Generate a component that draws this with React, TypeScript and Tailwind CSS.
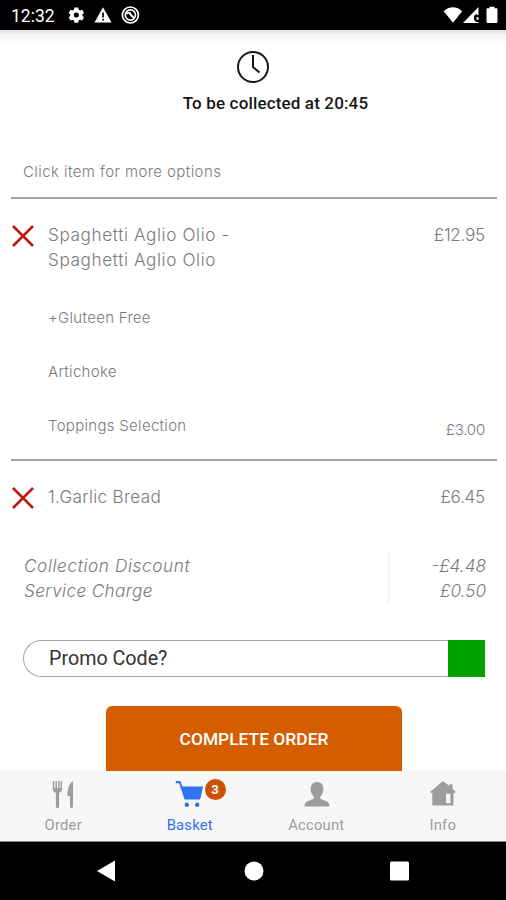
import type { ReactNode } from "react";
import { clsx } from "clsx";

type OrderLine = {
  name: string[];
  price: string;
  className: string;
};

const TABS = [
  { label: "Order", icon: <CutleryIcon /> },
  { label: "Basket", icon: <CartIcon />, badge: 3 },
  { label: "Account", icon: <PersonIcon /> },
  { label: "Info", icon: <HomeIcon /> },
];

function CutleryIcon() {
  return (
    <svg width="22" height="28" viewBox="0 0 22 28" fill="currentColor">
      <path d="M.8 1h1.5v7h1.2V1H5v7h1.2V1h1.5v7h1V1h1.3v8c0 2-1.300 3.300-2.900 3.700V26.500a1.600 1.600 0 0 1-3.200 0V12.700C2 12.300.8 11 .8 9z" />
      <path d="M21 1v25.500a1.500 1.500 0 0 1-3 0V16h-2.600C15 9.500 17.500 3 21 1z" />
    </svg>
  );
}

function CartIcon() {
  return (
    <svg className="mr-[2px]" width="28" height="28" viewBox="0 0 28 28" fill="currentColor">
      <path d="M.8 1h4.700l1.800 5.500H28l-2.500 11.700c-.2.800-.8 1.300-1.600 1.300H9.600L4.200 3.200H.8z" />
      <circle cx="11.800" cy="24.800" r="2.200" />
      <circle cx="22.200" cy="24.800" r="2.200" />
    </svg>
  );
}

function PersonIcon() {
  return (
    <svg className="ml-px" width="26" height="28" viewBox="0 0 26 28" fill="currentColor">
      <path d="M13 2c4 0 6.400 2.900 6.400 6.800 0 3.300-1.400 6.200-3.200 8v1.300c0 1 1.200 1.300 2.300 1.600 4 1.100 7 2.500 7 6.800H.5c0-4.300 3-5.700 7-6.800 1.100-.3 2.300-.6 2.300-1.600v-1.300c-1.800-1.800-3.200-4.700-3.200-8C6.600 4.900 9 2 13 2z" />
    </svg>
  );
}

function HomeIcon() {
  return (
    <svg className="ml-px" width="26" height="28" viewBox="0 0 26 28" fill="currentColor">
      <path
        fillRule="evenodd"
        d="M13 1l6.500 5V4.300h3V9l3.200 2.700-1.500 1.700-.7-.4v12.600H2.300V13l-.7.400L.3 11.700zM16 13.800v9.400h4.400v-9.400z"
      />
    </svg>
  );
}

function StatusBar() {
  return (
    <div className="flex h-[30px] shrink-0 items-center bg-black pl-[11px] pr-[7px] text-white">
      <span className="w-[57px] pt-[2px] text-[17.500px] leading-[30px]">12:32</span>
      <svg className="shrink-0" width="72" height="18" viewBox="0 0 72 18">
        <path
          fill="#fff"
          fillRule="evenodd"
          d="M5.800.8h4l.6 2.300 1.600.9 2.300-.7 2 3.400-1.700 1.600v1.800l1.700 1.600-2 3.400-2.300-.7-1.600.9-.6 2.300h-4l-.6-2.300-1.600-.9-2.300.7-2-3.400L1 10.100V8.300L-.7 6.700l2-3.400 2.300.7 1.600-.9zM7.800 6.300a2.800 2.800 0 1 0 0 5.600 2.800 2.800 0 0 0 0-5.600z"
          transform="translate(1.300 .8) scale(.9)"
        />
        <path
          fill="#fff"
          fillRule="evenodd"
          d="M35 1.200L43.500 16.500h-17zM34.200 6.500v5h1.700v-5zm0 6.300v1.800h1.700v-1.800z"
        />
        <circle cx="62.400" cy="9" r="8" fill="none" stroke="#fff" strokeWidth="1.700" />
        <circle cx="62.400" cy="9" r="5.100" fill="none" stroke="#fff" strokeWidth="1.600" />
        <path d="M58.500 8c2-2.500 3.500-1 4.200.5s2 2 3.300 3.500" fill="none" stroke="#fff" strokeWidth="2" />
      </svg>
      <svg className="ml-auto shrink-0" width="56" height="18" viewBox="0 0 56 18" fill="#fff">
        <path d="M.7 5.300C6-.2 14-.2 19.200 5.300L10 16.700z" />
        <path fillRule="evenodd" d="M35.500 1v16H20zM33.700 7.500L31 10v3.500l2 2.500h2.500v-2.200h-2v-2.500h2V9h-1.800z" />
        <path d="M46.500 2.200V.8h5v1.400h1.700c.8 0 1.300.5 1.300 1.300v12c0 .8-.5 1.500-1.300 1.500h-8.400c-.8 0-1.300-.7-1.300-1.500v-12c0-.8.500-1.300 1.300-1.300z" />
      </svg>
    </div>
  );
}

function RemoveIcon() {
  return (
    <svg className="shrink-0" width="22" height="22" viewBox="0 0 22 22">
      <path d="M1 1l20 20M21 1L1 21" stroke="#bd1710" strokeWidth="2.500" />
    </svg>
  );
}

function Item({ name, price, className }: OrderLine) {
  return (
    <div className="flex items-start px-3 text-[17.200px] leading-[25px]">
      <div className="w-9 shrink-0 pt-[3px]">
        <RemoveIcon />
      </div>
      <div className={clsx("grow", className)}>
        {name.map((line) => (
          <div key={line}>{line}</div>
        ))}
      </div>
      <span className="pr-[9px] tracking-[-0.3px]">{price}</span>
    </div>
  );
}

function Option({ children, price }: { children: ReactNode; price?: string }) {
  return (
    <div className="flex h-[54px] items-center pl-12 pr-[21px] text-[15px] tracking-[0.3px]">
      <span className="grow">{children}</span>
      {price && <span className="pt-2 tracking-[-0.2px]">{price}</span>}
    </div>
  );
}

function TabBar() {
  return (
    <div className="flex h-[70px] shrink-0 bg-[#f7f7f7]">
      {TABS.map((tab, i) => (
        <div
          key={tab.label}
          className={clsx(
            "relative flex flex-1 flex-col items-center pt-[9px]",
            i === 1 ? "text-[#2f72f3]" : "text-[#9d9d9d]"
          )}
        >
          {tab.icon}
          <span className="pt-[7px] text-[14.800px] leading-5 tracking-[0.2px]">{tab.label}</span>
          {tab.badge && (
            <span className="absolute left-[78px] top-[8px] flex size-[21px] items-center justify-center rounded-full bg-[#cd5205] text-[13px] font-bold text-white">
              {tab.badge}
            </span>
          )}
        </div>
      ))}
    </div>
  );
}

export default function App() {
  return (
    <div className="flex h-[900px] w-[506px] flex-col overflow-hidden bg-white font-['Roboto',sans-serif]">
      <StatusBar />

      <main className="flex h-[741px] shrink-0 flex-col overflow-hidden">
        <div className="h-4 shrink-0 bg-linear-to-b from-[#dedede] via-[#f5f5f5] via-30% to-white" />

        {/* Collection time */}
        <div className="flex h-[100px] shrink-0 flex-col items-center pt-1">
          <svg className="mr-px" width="34" height="34" viewBox="0 0 34 34" fill="none" stroke="#161616" strokeWidth="2">
            <circle cx="17" cy="17" r="15" />
            <path d="M17 5v12l6.500 5.500" />
          </svg>
          <p className="pl-[45px] pt-2 text-[17px] font-medium leading-[22px] tracking-[0.150px] text-[#161616]">
            To be collected at 20:45
          </p>
        </div>

        {/* Basket contents */}
        <div className="font-['Inter',sans-serif] font-light text-[#7a7a7a]">
          <p className="h-[51px] pl-[23px] pt-4 text-[15px] leading-5 tracking-[0.42px]">
            Click item for more options
          </p>
          <hr className="ml-[11px] mr-[9px] border-t-2 border-[#a3a3a3]" />
          <div className="h-[92px] pt-[23px]">
            <Item
              name={["Spaghetti Aglio Olio -", "Spaghetti Aglio Olio"]}
              price="£12.95"
              className="tracking-[0.6px]"
            />
          </div>
          <Option>+Gluteen Free</Option>
          <Option>Artichoke</Option>
          <Option price="£3.00">Toppings Selection</Option>
          <div className="h-[6px]" />
          <hr className="ml-[11px] mr-[9px] border-t-2 border-[#a3a3a3]" />
          <div className="h-[92px] pt-[23px]">
            <Item name={["1.Garlic Bread"]} price="£6.45" className="tracking-[0.3px]" />
          </div>
          <div className="flex h-[50px] pl-6 pr-5 text-[17.200px] italic leading-[25px]">
            <div className="w-[366px] border-r-[3px] border-[#f7f7f7] tracking-[0.6px]">
              <p>Collection Discount</p>
              <p className="tracking-[0.36px]">Service Charge</p>
            </div>
            <div className="grow text-right">
              <p>-£4.48</p>
              <p>£0.50</p>
            </div>
          </div>
        </div>

        <div className="ml-[23px] mt-[37px] flex h-[37px] w-[462px] shrink-0">
          <div className="flex grow items-center rounded-l-full border border-r-0 border-[#a3a3a3] pl-[25px] text-[19.700px] text-[#333]">
            Promo Code?
          </div>
          <div className="w-[37px] bg-[#00a200]" />
        </div>

        <button className="ml-[106px] mt-[29px] h-[65px] w-[296px] shrink-0 rounded-t-[6px] bg-[#d45d00] pt-0.5 text-[17.400px] font-medium text-white">
          COMPLETE ORDER
        </button>
      </main>

      <TabBar />
      <div className="h-px shrink-0 bg-[#888]" />

      {/* System navigation */}
      <div className="flex grow items-center justify-center bg-black">
        <svg width="312" height="22" viewBox="0 0 312 22" fill="#fff">
          <path d="M18 .5v21L0 11z" />
          <circle cx="157" cy="11" r="9.500" />
          <rect x="293" y="1.500" width="19" height="19" rx="1.500" />
        </svg>
      </div>
    </div>
  );
}
